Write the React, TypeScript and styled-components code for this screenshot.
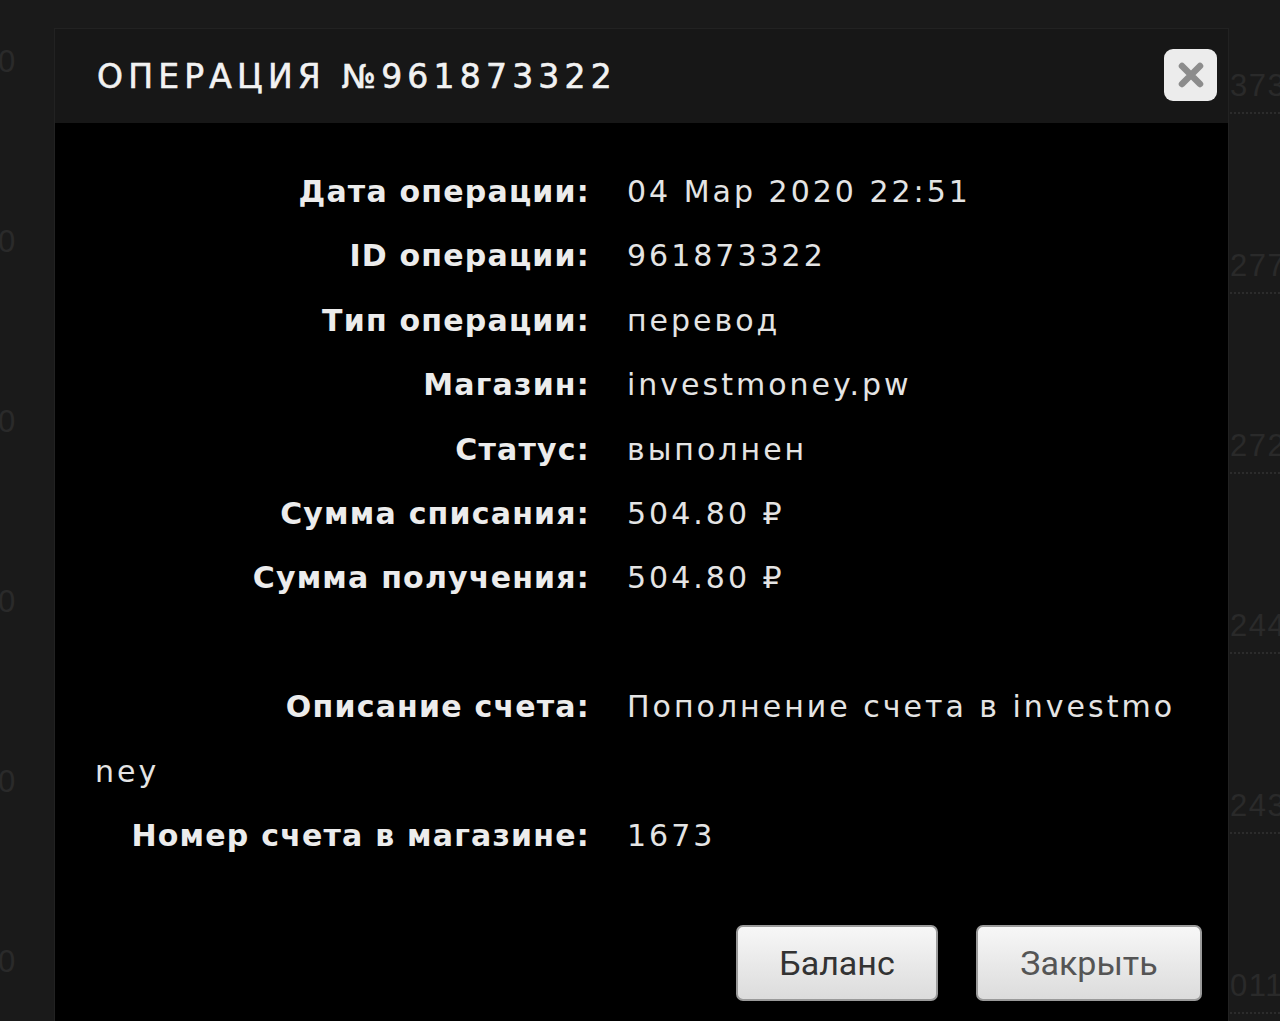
import React from 'react';
import styled, { createGlobalStyle } from 'styled-components';

const GlobalStyle = createGlobalStyle`
  html, body {
    margin: 0;
    padding: 0;
    background: #1a1a1a;
    overflow: hidden;
  }
  body {
    font-family: 'DejaVu Sans', sans-serif;
  }
`;

const Page = styled.div`
  position: relative;
  width: 1280px;
  height: 1021px;
  overflow: hidden;
  background: #1a1a1a;
`;

const BackList = styled.div`
  display: flex;
  flex-direction: column;
  padding-top: 44px;
`;

const BackRow = styled.div`
  height: 180px;
  display: flex;
  justify-content: space-between;
  align-items: flex-start;
  margin-left: -2px;
  margin-right: -40px;
  font-family: 'Liberation Sans', sans-serif;
  font-size: 31px;
  color: #2a2a2a;
`;

const BackRight = styled.span`
  letter-spacing: 1.5px;
  padding-top: 24px;
  border-bottom: 2px dotted #2c2c2c;
  padding-bottom: 8px;
  width: 90px;
  overflow: hidden;
  white-space: nowrap;
`;

const Modal = styled.div`
  position: absolute;
  left: 54px;
  top: 28px;
  width: 1173px;
  height: 1010px;
  background: #171717;
  border: 1px solid #222;
  border-bottom: none;
  display: flex;
  flex-direction: column;
`;

const Header = styled.div`
  height: 94px;
  display: flex;
  align-items: center;
  justify-content: space-between;
  padding: 0 11px 0 42px;
`;

const Title = styled.h1`
  margin: 0;
  font-family: 'DejaVu Sans', sans-serif;
  font-weight: normal;
  font-size: 33px;
  letter-spacing: 5.2px;
  color: #f2f2f2;
  -webkit-text-stroke: 0.6px #f2f2f2;
`;

const CloseButton = styled.button`
  width: 53px;
  height: 52px;
  border-radius: 9px;
  border: none;
  background: #ececec;
  display: flex;
  align-items: center;
  justify-content: center;
  padding: 0;
  margin-top: -2px;
`;

const Body = styled.div`
  flex: 1;
  background: #000;
  padding: 37px 26px 0 40px;
`;

const Line = styled.div<{ $spaced?: boolean }>`
  font-size: 30px;
  line-height: 64.4px;
  color: #e4e4e4;
  margin-top: ${(p) => (p.$spaced ? '64.4px' : '0')};
  word-break: break-all;
  padding-right: 14px;
`;

const Label = styled.span`
  display: inline-block;
  width: 495px;
  margin-right: 37px;
  text-align: right;
  font-weight: bold;
  letter-spacing: 1.2px;
  color: #ececec;
  word-break: normal;
`;

const Value = styled.span`
  letter-spacing: 3px;
`;

const Actions = styled.div`
  display: flex;
  justify-content: flex-end;
  gap: 38px;
  margin-top: 57px;
`;

const Button = styled.button<{ $w: number; $color: string }>`
  width: ${(p) => p.$w}px;
  height: 76px;
  border-radius: 7px;
  border: 2px solid #9a9a9a;
  background: linear-gradient(#f7f7f7, #e8e8e8 55%, #dcdcdc);
  font-family: Roboto, 'Liberation Sans', sans-serif;
  font-size: 34px;
  color: ${(p) => p.$color};
  padding: 0;
`;

const rows: [string, string][] = [
  ['Дата операции:', '04 Мар 2020 22:51'],
  ['ID операции:', '961873322'],
  ['Тип операции:', 'перевод'],
  ['Магазин:', 'investmoney.pw'],
  ['Статус:', 'выполнен'],
  ['Сумма списания:', '504.80 ₽'],
  ['Сумма получения:', '504.80 ₽'],
];

const backNums = ['373', '277', '272', '244', '243', '011'];

export default function App() {
  return (
    <Page>
      <GlobalStyle />
      <BackList>
        {backNums.map((n) => (
          <BackRow key={n}>
            <span>0</span>
            <BackRight>{n}</BackRight>
          </BackRow>
        ))}
      </BackList>
      <Modal>
        <Header>
          <Title>ОПЕРАЦИЯ №961873322</Title>
          <CloseButton aria-label="close">
            <svg width="26" height="26" viewBox="0 0 26 26">
              <path d="M4 4 L22 22 M22 4 L4 22" stroke="#8c8c8c" strokeWidth="6.5" strokeLinecap="round" />
            </svg>
          </CloseButton>
        </Header>
        <Body>
          {rows.map(([l, v]) => (
            <Line key={l}>
              <Label>{l}</Label>
              <Value>{v}</Value>
            </Line>
          ))}
          <Line $spaced>
            <Label>Описание счета:</Label>
            <Value>Пополнение счета в investmoney</Value>
          </Line>
          <Line>
            <Label>Номер счета в магазине:</Label>
            <Value>1673</Value>
          </Line>
          <Actions>
            <Button $w={202} $color="#333">Баланс</Button>
            <Button $w={226} $color="#555">Закрыть</Button>
          </Actions>
        </Body>
      </Modal>
    </Page>
  );
}
